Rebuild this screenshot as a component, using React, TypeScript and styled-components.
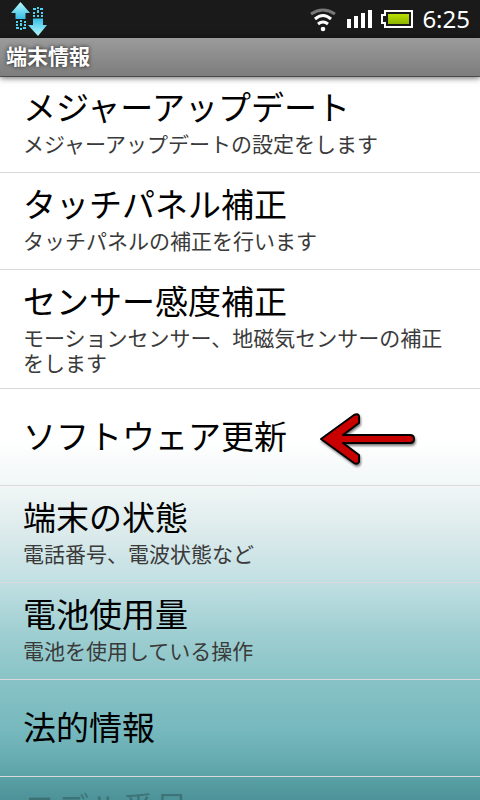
import React from "react";
import styled, { createGlobalStyle } from "styled-components";

const GlobalStyle = createGlobalStyle`
  * { box-sizing: border-box; }
  body {
    margin: 0;
    overflow: hidden;
    font-family: "Noto Sans CJK JP", sans-serif;
  }
`;

const Screen = styled.div`
  display: flex;
  flex-direction: column;
  height: 100vh;
  overflow: hidden;
  background: linear-gradient(
    #ffffff 55%, #f0f6f6 61%, #deebec 66%, #c0dfe2 73%, #a0cfd2 79%,
    #88c3c6 85%, #77b9be 91%, #6bb0b5 94%, #5ba2a6 97%, #4c9298 100%
  );
`;

const StatusBar = styled.div`
  display: flex;
  flex: none;
  align-items: center;
  justify-content: space-between;
  height: 38px;
  padding: 0 10px 0 11px;
  background: #1a1a1a;
`;

const StatusIcons = styled.div`
  display: flex;
  align-items: center;
  gap: 9px;
`;

const Clock = styled.time`
  color: #fff;
  font: 400 24px/36px "Noto Sans", sans-serif;
`;

const TitleBar = styled.header`
  flex: none;
  z-index: 1;
  height: 39px;
  padding: 0 6px;
  border-bottom: 1px solid #4c4c4c;
  background: linear-gradient(#9b9b9b, #7d7d7d);
  box-shadow: 0 1px 6px rgba(0, 0, 0, 0.6);
`;

const TitleText = styled.h1`
  margin: 0;
  color: #fff;
  font-size: 21px;
  font-weight: 700;
  line-height: 34px;
  text-shadow: 0 0 4px rgba(0, 0, 0, 0.8);
`;

const List = styled.main`
  flex: 1;
  min-height: 0;
  margin-top: -1px;
  overflow: hidden;
`;

const Row = styled.button<{ $single?: boolean }>`
  position: relative;
  display: flex;
  flex-direction: column;
  justify-content: ${(p) => (p.$single ? "center" : "flex-start")};
  gap: 4px;
  width: 100%;
  min-height: 97px;
  padding: 9px 23px 13px;
  border: 0;
  border-bottom: 1px solid #dbd9db;
  background: none;
  font-family: inherit;
  text-align: left;
`;

const RowTitle = styled.span<{ $faded?: boolean }>`
  color: ${(p) => (p.$faded ? "rgba(0, 0, 0, 0.22)" : "#000")};
  font-size: 33px;
  line-height: 42px;
`;

const RowSummary = styled.span`
  color: #3a3a3a;
  font-size: 21px;
  line-height: 25px;
`;

const Pointer = styled.svg`
  position: absolute;
  left: 316px;
  top: 20px;
  filter: drop-shadow(1px 2px 1px rgba(0, 0, 0, 0.5));
`;

const SyncIcon = () => (
  <svg width="36" height="38" viewBox="0 0 36 38" aria-hidden="true">
    <defs>
      <linearGradient id="up" x1="0" y1="0" x2="0" y2="1">
        <stop offset="0" stopColor="#b9fbff" />
        <stop offset="1" stopColor="#35bde6" />
      </linearGradient>
      <linearGradient id="down" x1="0" y1="0" x2="0" y2="1">
        <stop offset="0" stopColor="#35bde6" />
        <stop offset="1" stopColor="#b9fbff" />
      </linearGradient>
    </defs>
    <path d="M9.500 2L19 13H14.500V19H4.500V13H0Z" fill="url(#up)" />
    <path d="M27 36L36 25H32V18.500H22V25H17Z" fill="url(#down)" />
    <g fill="#4fd3ee">
      <path d="M5 21h2v2H5zM13 21h2v2h-2zM9 20h2v2H9zM9 23h2v3H9zM5 24h2v2H5zM13 24h2v2h-2zM5 27h3v2H5zM12 27h3v2h-3zM9 28h2v2H9z" />
      <path d="M22 8h3v2h-3zM29 8h3v2h-3zM26 7h2v2h-2zM26 10h2v3h-2zM22 12h2v2h-2zM30 12h2v2h-2zM22 15h2v2h-2zM30 15h2v2h-2zM26 15h2v2h-2z" />
    </g>
  </svg>
);

const WifiIcon = () => (
  <svg width="28" height="38" viewBox="0 0 28 38" fill="none" aria-hidden="true">
    <path d="M2 14Q14 6 26 14" stroke="#777" strokeWidth="3" />
    <path d="M6 19Q14 12 22 19" stroke="#fff" strokeWidth="3" />
    <path d="M9 24Q14 20 19 24" stroke="#fff" strokeWidth="3" />
    <circle cx="14" cy="29" r="2.300" fill="#fff" />
  </svg>
);

const SignalIcon = () => (
  <svg width="26" height="38" viewBox="0 0 26 38" fill="#fff" aria-hidden="true">
    <path d="M1 19h4v9H1zM8 16h4v12H8zM15 13h4v15h-4zM22 10h4v18h-4z" />
  </svg>
);

const BatteryIcon = () => (
  <svg width="32" height="38" viewBox="0 0 32 38" aria-hidden="true">
    <defs>
      <linearGradient id="charge" x1="0" y1="0" x2="0" y2="1">
        <stop offset="0" stopColor="#b8df00" />
        <stop offset="1" stopColor="#8fb400" />
      </linearGradient>
    </defs>
    <path d="M4 11H31V27H4V23H1V15H4Z" fill="none" stroke="#fff" strokeWidth="2" />
    <path d="M7 14h21v10H7z" fill="url(#charge)" />
  </svg>
);

type Item = { title: string; summary?: string; pointed?: boolean; faded?: boolean };

const items: Item[] = [
  { title: "メジャーアップデート", summary: "メジャーアップデートの設定をします" },
  { title: "タッチパネル補正", summary: "タッチパネルの補正を行います" },
  { title: "センサー感度補正", summary: "モーションセンサー、地磁気センサーの補正をします" },
  { title: "ソフトウェア更新", pointed: true },
  { title: "端末の状態", summary: "電話番号、電波状態など" },
  { title: "電池使用量", summary: "電池を使用している操作" },
  { title: "法的情報" },
  { title: "モデル番号", faded: true },
];

export default function App() {
  return (
    <Screen lang="ja">
      <GlobalStyle />
      <StatusBar>
        <SyncIcon />
        <StatusIcons>
          <WifiIcon />
          <SignalIcon />
          <BatteryIcon />
          <Clock>6:25</Clock>
        </StatusIcons>
      </StatusBar>
      <TitleBar>
        <TitleText>端末情報</TitleText>
      </TitleBar>
      <List>
        {items.map((item) => (
          <Row key={item.title} type="button" $single={!item.summary && !item.faded}>
            <RowTitle $faded={item.faded}>{item.title}</RowTitle>
            {item.summary && <RowSummary>{item.summary}</RowSummary>}
            {item.pointed && (
              <Pointer width="104" height="60" viewBox="0 0 104 60" aria-hidden="true">
                <path
                  d="M5 30L38 6Q42 4 43 7V14L27 26H94Q98 26 98 30Q98 34 94 34H27L43 46V53Q41 56 38 54Z"
                  fill="#c90000"
                  stroke="#000"
                  strokeWidth="2"
                  strokeLinejoin="round"
                />
              </Pointer>
            )}
          </Row>
        ))}
      </List>
    </Screen>
  );
}
